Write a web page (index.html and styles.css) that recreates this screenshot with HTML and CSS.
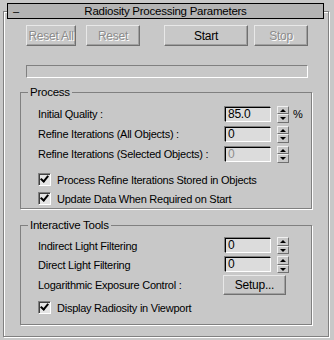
FILE: index.html
```html
<!DOCTYPE html>
<html lang="en">
<head>
    <meta charset="UTF-8">
    <title>Radiosity Processing Parameters</title>
    <link rel="stylesheet" href="styles.css">
</head>
<body>
    <!-- Rollout title -->
    <div class="rollout-title">
        <span class="collapse">&ndash;</span>
        <span class="title-text">Radiosity Processing Parameters</span>
    </div>

    <div class="rollout">
        <!-- Top buttons -->
        <div class="button-row">
            <button class="button disabled w-reset-all">Reset All</button>
            <button class="button disabled w-reset">Reset</button>
            <button class="button w-start">Start</button>
            <button class="button disabled w-stop">Stop</button>
        </div>

        <div class="progress"></div>

        <!-- Process group -->
        <fieldset class="group group-process">
            <legend>Process</legend>
            <div class="row">
                <span class="label">Initial Quality :</span>
                <span class="field">85.0</span>
                <span class="spinner"><i class="up"></i><i class="down"></i></span>
                <span class="unit">%</span>
            </div>
            <div class="row">
                <span class="label">Refine Iterations (All Objects) :</span>
                <span class="field">0</span>
                <span class="spinner"><i class="up"></i><i class="down"></i></span>
            </div>
            <div class="row">
                <span class="label">Refine Iterations (Selected Objects) :</span>
                <span class="field disabled">0</span>
                <span class="spinner"><i class="up"></i><i class="down"></i></span>
            </div>
            <div class="check-row first-check">
                <span class="checkbox checked"></span>
                <span>Process Refine Iterations Stored in Objects</span>
            </div>
            <div class="check-row">
                <span class="checkbox checked"></span>
                <span>Update Data When Required on Start</span>
            </div>
        </fieldset>

        <!-- Interactive tools group -->
        <fieldset class="group group-tools">
            <legend>Interactive Tools</legend>
            <div class="row">
                <span class="label">Indirect Light Filtering</span>
                <span class="field">0</span>
                <span class="spinner"><i class="up"></i><i class="down"></i></span>
            </div>
            <div class="row">
                <span class="label">Direct Light Filtering</span>
                <span class="field">0</span>
                <span class="spinner"><i class="up"></i><i class="down"></i></span>
            </div>
            <div class="row setup-row">
                <span class="label">Logarithmic Exposure Control :</span>
                <button class="button setup">Setup...</button>
            </div>
            <div class="check-row tools-check">
                <span class="checkbox checked"></span>
                <span>Display Radiosity in Viewport</span>
            </div>
        </fieldset>
    </div>
</body>
</html>
```

FILE: styles.css
```css
body {
    margin: 0;
    background-color: #c8c8c8;
    font-family: 'Liberation Sans', Arial, sans-serif;
    font-size: 11px;
    letter-spacing: -0.25px;
    color: #000;
    width: 334px;
    height: 340px;
    overflow: hidden;
}
.rollout-title {
    position: relative;
    z-index: 1;
    display: flex;
    align-items: center;
    height: 14px;
    margin: 3px 10px 0 7px;
    border: 1px solid #000;
    background-color: #b4b4b4;
}
.collapse {
    width: 20px;
    padding-left: 5px;
    box-sizing: border-box;
}
.title-text {
    flex: 1;
    text-align: center;
    padding-right: 20px;
    font-size: 11.5px;
}
.rollout {
    height: 324px;
    margin: -8px 5px 0 3px;
    border: 1px solid #808080;
    box-shadow: inset 1px 1px 0 #fff, 1px 1px 0 #fff;
}
.button-row {
    display: flex;
    margin: 13px 0 0 22px;
}
.button {
    height: 21px;
    padding: 0;
    font-family: inherit;
    font-size: 12px;
    letter-spacing: -0.25px;
    color: #000;
    background-color: #c8c8c8;
    border: 1px solid;
    border-color: #e8e8e8 #707070 #707070 #e8e8e8;
    box-shadow: inset -1px -1px 0 #a0a0a0;
}
.button.disabled {
    color: #8c8c8c;
    text-shadow: 1px 1px 0 #fff;
}
.w-reset-all { width: 50px; }
.w-reset { width: 54px; margin-left: 10px; }
.w-start { width: 84px; margin-left: 24px; }
.w-stop { width: 54px; margin-left: 6px; }
.progress {
    width: 280px;
    height: 11px;
    margin: 19px 0 0 22px;
    border: 1px solid;
    border-color: #808080 #fff #fff #808080;
}
.group {
    margin: 0 0 0 16px;
    padding: 0 0 0 17px;
    width: 292px;
    box-sizing: border-box;
    border: 1px solid #808080;
    box-shadow: 1px 1px 0 #fff;
}
.group legend {
    padding: 0 2px;
    margin-left: -10px;
    line-height: 14px;
    font-size: 11.5px;
}
.group-process {
    height: 124px;
    margin-top: 7px;
    padding-top: 5px;
}
.group-tools {
    height: 107px;
    margin-top: 9px;
    padding-top: 4px;
}
.row {
    display: flex;
    align-items: center;
    height: 20px;
    white-space: nowrap;
}
.group-tools .row {
    height: 19px;
}
.group-tools .setup-row {
    height: 21px;
}
.label {
    width: 187px;
    flex-shrink: 0;
}
.field {
    width: 42px;
    height: 13px;
    line-height: 13px;
    padding-left: 2px;
    font-size: 12px;
    background-color: #dcdcdc;
    border: 1px solid;
    border-color: #000 #fff #fff #000;
    box-shadow: -1px -1px 0 #808080;
}
.field.disabled {
    color: #8c8c8c;
}
.spinner {
    display: flex;
    flex-direction: column;
    width: 12px;
    height: 17px;
    margin-left: 6px;
}
.spinner i {
    flex: 1;
    position: relative;
    box-sizing: border-box;
    border: 1px solid;
    border-color: #f0f0f0 #707070 #707070 #f0f0f0;
    background-color: #c8c8c8;
}
.spinner i::after {
    content: '';
    position: absolute;
    left: 2px;
    top: 2px;
    border-left: 3px solid transparent;
    border-right: 3px solid transparent;
}
.spinner .up::after {
    border-bottom: 3px solid #000;
}
.spinner .down::after {
    top: 2px;
    border-top: 3px solid #000;
}
.unit {
    margin-left: 4px;
}
.setup {
    width: 63px;
    height: 20px;
    margin-left: -2px;
}
.check-row {
    display: flex;
    align-items: center;
    height: 19px;
    white-space: nowrap;
}
.first-check {
    margin-top: 6px;
}
.tools-check {
    margin-top: 3px;
}
.checkbox {
    position: relative;
    width: 11px;
    height: 11px;
    margin-right: 6px;
    background-color: #e4e4e4;
    border: 1px solid;
    border-color: #808080 #fff #fff #808080;
    box-shadow: inset 1px 1px 0 #404040;
}
.checkbox.checked::after {
    content: '';
    position: absolute;
    left: 3px;
    top: 0px;
    width: 3px;
    height: 6px;
    border: solid #000;
    border-width: 0 2px 2px 0;
    transform: rotate(40deg);
}
```
